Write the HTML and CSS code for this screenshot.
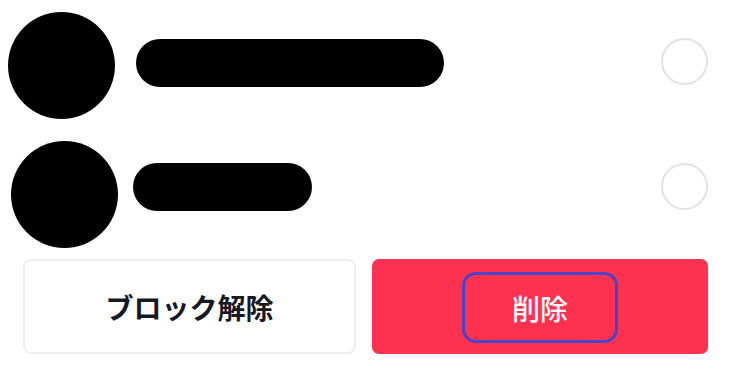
FILE: index.html
```html
<!DOCTYPE html>
<html lang="ja">
<head>
<meta charset="utf-8">
<link rel="stylesheet" href="styles.css">
</head>
<body>
<div class="list">
  <div class="row row-1">
    <div class="avatar"></div>
    <div class="name-bar bar-long"></div>
    <div class="check"></div>
  </div>
  <div class="row row-2">
    <div class="avatar"></div>
    <div class="name-bar bar-short"></div>
    <div class="check"></div>
  </div>
</div>
<div class="actions">
  <button class="btn btn-unblock">ブロック解除</button>
  <button class="btn btn-delete"><span class="focus-ring">削除</span></button>
</div>
</body>
</html>
```
FILE: styles.css
```css
html, body {
  margin: 0;
  padding: 0;
  background: #ffffff;
  width: 736px;
  height: 379px;
  overflow: hidden;
  font-family: "Noto Sans CJK JP", "Noto Sans", sans-serif;
}

.list {
  display: flex;
  flex-direction: column;
  gap: 22px;
  padding-top: 12px;
}

.row {
  display: flex;
  align-items: flex-start;
  padding-right: 28px;
}

.avatar {
  width: 107px;
  height: 107px;
  border-radius: 50%;
  background: #000;
  flex: none;
}

.name-bar {
  height: 48px;
  border-radius: 24px;
  background: #000;
  flex: none;
}

.check {
  width: 47px;
  height: 47px;
  box-sizing: border-box;
  border: 2px solid #e2e2e2;
  border-radius: 50%;
  margin-left: auto;
  flex: none;
}

.row-1 .avatar { margin-left: 8px; }
.row-1 .bar-long { margin-left: 21px; margin-top: 27px; width: 308px; }
.row-1 .check { margin-top: 26px; }

.row-2 .avatar { margin-left: 11px; }
.row-2 .bar-short { margin-left: 15px; margin-top: 22px; width: 179px; }
.row-2 .check { margin-top: 22px; }

.actions {
  display: grid;
  grid-template-columns: 333px 336px;
  gap: 16px;
  padding: 11px 0 0 23px;
}

.btn {
  height: 95px;
  box-sizing: border-box;
  display: flex;
  align-items: center;
  justify-content: center;
  font-family: "Noto Sans CJK JP", "Noto Sans", sans-serif;
  font-size: 28px;
  padding: 0;
  margin: 0;
}

.btn-unblock {
  background: #ffffff;
  border: 2px solid #eeeeee;
  border-radius: 8px;
  color: #161823;
  font-weight: 700;
}

.btn-delete {
  background: #fe3150;
  border: none;
  border-radius: 7px;
  color: #ffffff;
  font-weight: 500;
}

.focus-ring {
  width: 156px;
  height: 71px;
  box-sizing: border-box;
  border: 3px solid #4a44c6;
  border-radius: 14px;
  display: flex;
  align-items: center;
  justify-content: center;
  margin-top: 2px;
}
```
